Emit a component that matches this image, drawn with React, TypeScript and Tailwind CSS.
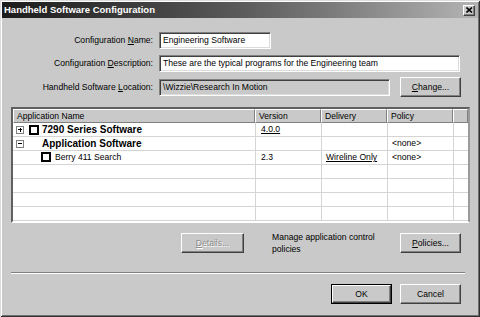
import React from "react";

const raised =
  "bg-[#c9c9c9] border border-t-white border-l-white border-b-[#404040] border-r-[#404040] shadow-[inset_-1px_-1px_0_#808080]";
const sunken =
  "border border-t-[#808080] border-l-[#808080] border-b-white border-r-white shadow-[inset_1px_1px_0_#404040,inset_-1px_-1px_0_#dcdcdc]";

function U({ children }: { children: React.ReactNode }) {
  return <span className="underline underline-offset-[1px]">{children}</span>;
}

function Btn({
  children,
  className = "",
  isDefault = false,
}: {
  children: React.ReactNode;
  className?: string;
  isDefault?: boolean;
}) {
  if (isDefault) {
    return (
      <div className={`border border-black ${className}`}>
        <div className={`${raised} w-full h-full flex items-center justify-center`}>{children}</div>
      </div>
    );
  }
  return <div className={`${raised} flex items-center justify-center ${className}`}>{children}</div>;
}

function Expander({ open }: { open: boolean }) {
  return (
    <div className="w-[8px] h-[8px] border border-[#808080] bg-white flex items-center justify-center relative">
      <div className="absolute w-[4px] h-px bg-black left-[1px] top-[2.5px]" />
      {!open && <div className="absolute w-px h-[4px] bg-black left-[2.5px] top-[1px]" />}
    </div>
  );
}

function Check() {
  return <div className="w-[10px] h-[10px] border-2 border-black bg-white" />;
}

const cols = ["w-[242px]", "w-[66px]", "w-[66px]", "w-[66px]", "w-[15px]"];

type Row = [React.ReactNode, React.ReactNode, React.ReactNode, React.ReactNode];

const rows: Row[] = [
  [
    <div className="flex items-center pl-[3px]">
      <Expander open={false} />
      <div className="ml-[5px]">
        <Check />
      </div>
      <span className="ml-[3px] font-bold text-[10px]">7290 Series Software</span>
    </div>,
    <span className="pl-[5px] underline">4.0.0</span>,
    "",
    "",
  ],
  [
    <div className="flex items-center pl-[3px]">
      <Expander open={true} />
      <span className="ml-[18px] font-bold text-[10px]">Application Software</span>
    </div>,
    "",
    "",
    <span className="pl-[4px]">&lt;none&gt;</span>,
  ],
  [
    <div className="flex items-center pl-[28px]">
      <Check />
      <span className="ml-[4px]">Berry 411 Search</span>
    </div>,
    <span className="pl-[5px]">2.3</span>,
    <span className="pl-[4px] underline">Wireline Only</span>,
    <span className="pl-[4px]">&lt;none&gt;</span>,
  ],
  ["", "", "", ""],
  ["", "", "", ""],
  ["", "", "", ""],
  ["", "", "", ""],
];

export default function App() {
  return (
    <div className="w-[480px] h-[317px] bg-[#c9c9c9] p-[2px] flex flex-col font-['Liberation_Sans',Arial,sans-serif] text-[8.6px] text-black shadow-[inset_1px_1px_0_#dcdcdc,inset_-1px_-1px_0_#303030,inset_2px_2px_0_#ffffff,inset_-2px_-2px_0_#707070] overflow-hidden">
      {/* Title bar */}
      <div className="h-[16px] shrink-0 bg-gradient-to-r from-[#1c1c1c] via-[#5a5a5a] to-[#b4b4b4] flex items-center justify-between pl-[2px] pr-[3px]">
        <span className="text-white font-bold text-[9.5px] leading-none">Handheld Software Configuration</span>
        <div className={`${raised} w-[12px] h-[11px] flex items-center justify-center`}>
          <svg width="7" height="6" viewBox="0 0 7 6">
            <path d="M0.5 0.5 L6 5.5 M6 0.5 L0.5 5.5" stroke="#000" strokeWidth="1.6" />
          </svg>
        </div>
      </div>

      <div className="flex flex-col pl-[9px]">
        {/* Form rows */}
        <div className="mt-[14px] h-[17px] flex items-center">
          <div className="w-[142px] text-right">
            Configuration <U>N</U>ame:
          </div>
          <div className={`${sunken} ml-[6px] w-[112px] h-[17px] bg-white flex items-center pl-[3px]`}>
            Engineering Software
          </div>
        </div>
        <div className="mt-[6px] h-[17px] flex items-center">
          <div className="w-[142px] text-right">
            Configuration <U>D</U>escription:
          </div>
          <div className={`${sunken} ml-[6px] w-[301px] h-[17px] bg-white flex items-center pl-[3px]`}>
            These are the typical programs for the Engineering team
          </div>
        </div>
        <div className="mt-[5px] h-[20px] flex items-center">
          <div className="w-[142px] text-right">
            Handheld Software <U>L</U>ocation:
          </div>
          <div className={`${sunken} ml-[6px] w-[231px] h-[17px] bg-[#c9c9c9] flex items-center pl-[3px]`}>
            \Wizzie\Research In Motion
          </div>
          <Btn className="ml-[10px] w-[61px] h-[20px]">
            <span>
              <U>C</U>hange...
            </span>
          </Btn>
        </div>

        {/* Table */}
        <div className="mt-[10px] w-[459px] h-[116px] border-2 border-t-[#606060] border-l-[#606060] border-b-white border-r-[#9a9a9a] bg-white flex flex-col overflow-hidden">
          <div className="flex h-[14px] shrink-0">
            {["Application Name", "Version", "Delivery", "Policy", ""].map((h, i) => (
              <div
                key={i}
                className={`${cols[i]} h-full bg-[#c9c9c9] border border-t-white border-l-white border-b-[#808080] border-r-[#808080] flex items-center pl-[3px] shrink-0`}
              >
                {h}
              </div>
            ))}
          </div>
          {rows.map((r, ri) => (
            <div key={ri} className="flex h-[14px] shrink-0 border-b border-[#d4d4d4]">
              {[...r, ""].map((c, ci) => (
                <div
                  key={ci}
                  className={`${cols[ci]} h-full flex items-center shrink-0 ${ci > 0 ? "border-l border-[#d4d4d4]" : ""}`}
                >
                  {c}
                </div>
              ))}
            </div>
          ))}
        </div>

        {/* Details / Policies */}
        <div className="mt-[10px] h-[20px] flex items-center">
          <Btn className="ml-[170px] w-[63px] h-[20px]">
            <span className="text-[#8c8c8c] [text-shadow:1px_1px_0_#ffffff]">
              <U>D</U>etails...
            </span>
          </Btn>
          <div className="ml-[28px] w-[128px] leading-[12px]">
            Manage application control
            <br />
            policies
          </div>
          <Btn className="w-[61px] h-[20px]">
            <span>
              <U>P</U>olicies...
            </span>
          </Btn>
        </div>

        {/* Separator */}
        <div className="mt-[19px] w-[454px] border-t border-t-[#808080] border-b border-b-white" />

        {/* OK / Cancel */}
        <div className="mt-[10px] h-[20px] flex items-center">
          <Btn isDefault className="ml-[320px] w-[61px] h-[20px]">
            OK
          </Btn>
          <Btn className="ml-[8px] w-[61px] h-[20px]">Cancel</Btn>
        </div>
      </div>
    </div>
  );
}
